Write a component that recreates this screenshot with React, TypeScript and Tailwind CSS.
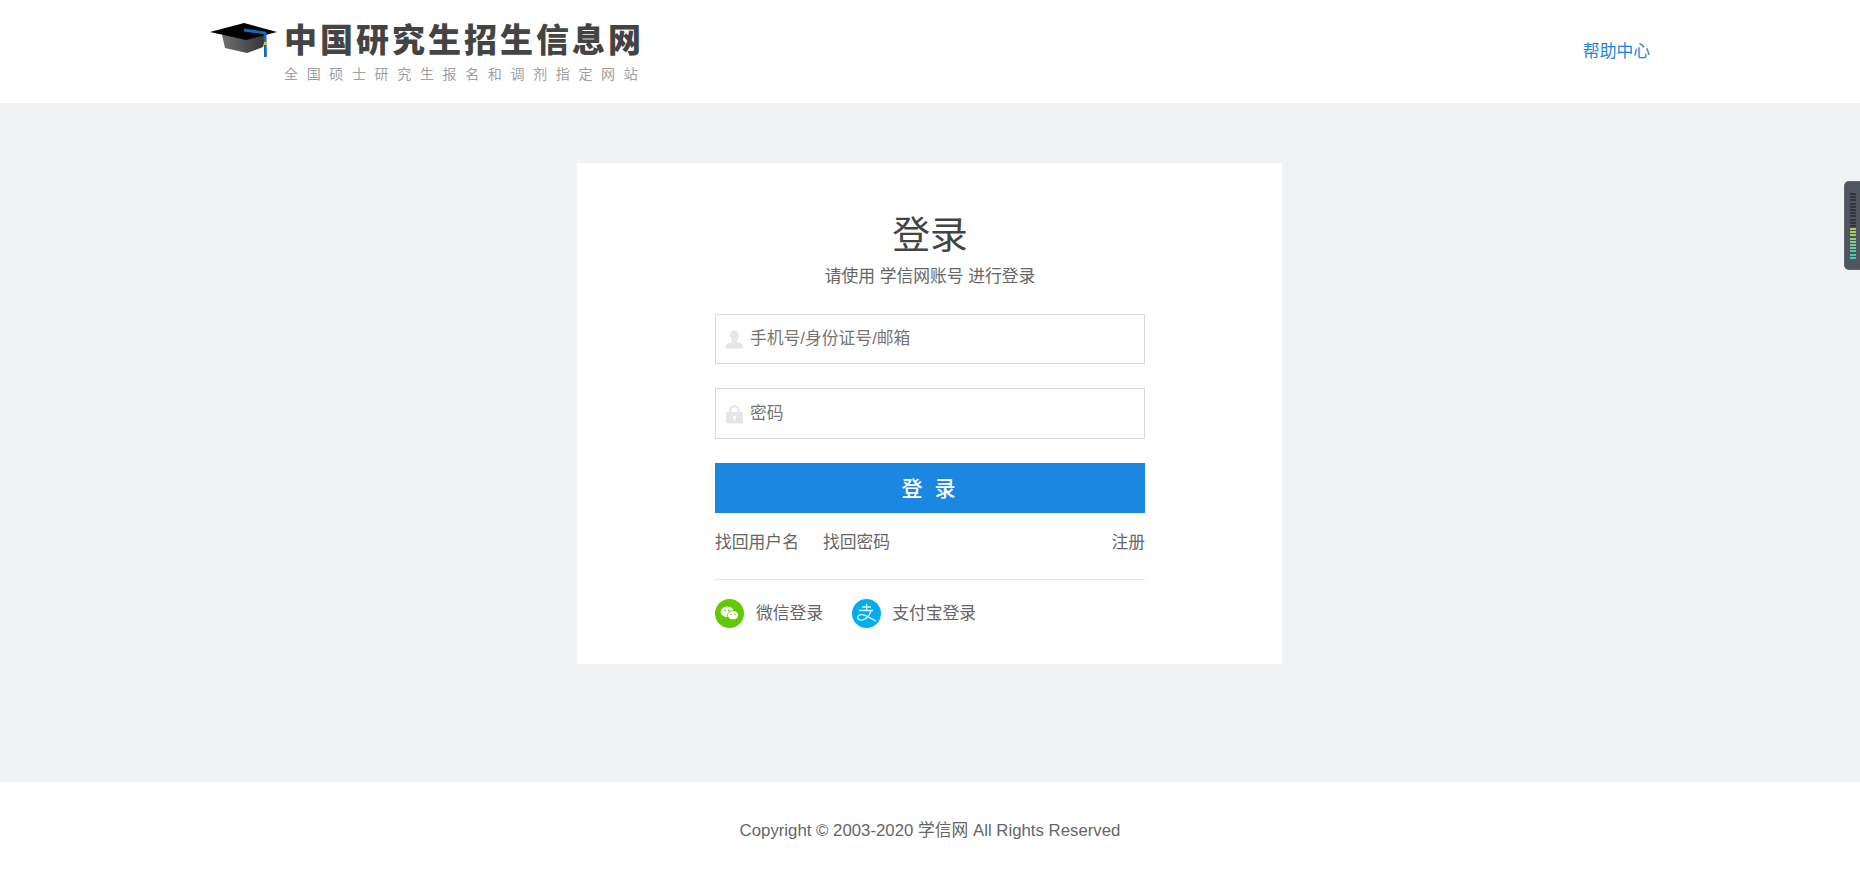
const sans = "font-['Liberation_Sans','Noto_Sans_CJK_SC',sans-serif]"

function Cap() {
  return (
    <svg width="68" height="36" viewBox="0 0 68 36" className="shrink-0">
      <defs>
        <linearGradient id="capBase" x1="0" y1="0" x2="1" y2="0">
          <stop offset="0" stopColor="#707070" />
          <stop offset="1" stopColor="#333333" />
        </linearGradient>
      </defs>
      <path d="M12 12 L15 25 L37 30 L53 24 L56 12 Z" fill="url(#capBase)" />
      <path d="M0 9 L34 0 L67 9 L36 17 Z" fill="#000" />
      <path d="M34 7 L55 10 L55.500 34" fill="none" stroke="#1467c4" strokeWidth="2.800" />
      <rect x="54" y="19" width="3" height="3" fill="#e8b93c" />
    </svg>
  )
}

function LevelMeter() {
  const bars = ['#33363d', '#33363d', '#33363d', '#33363d', '#33363d', '#33363d', '#33363d', '#33363d', '#33363d', '#33363d', '#33363d', '#b8c93c', '#aecb52', '#a3cd62', '#94ce72', '#82cf80', '#70cf8c', '#5ecf98', '#4ccda2', '#40ccaa', '#38cbb0']
  return (
    <div className="fixed right-0 top-[181px] w-[16px] h-[89px] bg-[#50545e] rounded-l-[5px] border border-r-0 border-[#62666f] pt-[11px] pl-[5px] flex flex-col gap-[1.2px]">
      {bars.map((c, i) => (
        <div key={i} className="w-[6px] h-[2px]" style={{ backgroundColor: c }} />
      ))}
    </div>
  )
}

export default function App() {
  return (
    <div className={`${sans} min-h-screen bg-white text-[#666]`}>
      <header className="h-[103px] bg-white flex items-start justify-between pl-[210px] pr-[210px]">
        <div className="flex items-start pt-[23px]">
          <Cap />
          <div className="ml-[6px] -mt-[6px]">
            <div className="font-['Noto_Sans_CJK_SC',sans-serif] font-black text-[33px] leading-[42px] tracking-[3px] text-[#444] whitespace-nowrap">中国研究生招生信息网</div>
            <div className="text-[14px] leading-[18px] tracking-[8.65px] text-[#a0a0a0] mt-[6px] whitespace-nowrap">全国硕士研究生报名和调剂指定网站</div>
          </div>
        </div>
        <a className="mt-[42px] text-[16.8px] leading-[20px] text-[#1a85e0]">帮助中心</a>
      </header>

      <main className="h-[679px] bg-[#f0f2f4] pt-[60px] pr-[1px]">
        <div className="w-[705px] h-[501px] bg-white mx-auto pt-[51px] pl-[138px] pr-[137px]">
          <h1 className="text-[37.8px] leading-[42px] text-center text-[#444]">登录</h1>
          <p className="text-[16.8px] leading-[20px] text-center mt-[11px]">请使用 学信网账号 进行登录</p>

          <div className="mt-[27px] h-[50px] border border-[#d9d9d9] flex items-center pl-[10px]">
            <svg width="17" height="19" viewBox="0 0 18 19" className="shrink-0">
              <path d="M9 0c2.800 0 4.600 2.200 4.600 5S12.200 10 11.500 11c.2 1 1 1.500 3 2.300 2 .8 3.500 1.500 3.500 3.200V19H0v-2.500c0-1.700 1.500-2.400 3.500-3.200 2-.8 2.800-1.300 3-2.300C5.800 10 4.400 7.800 4.400 5S6.200 0 9 0z" fill="#e6e6e6" />
            </svg>
            <span className="ml-[7px] text-[16.8px] text-[#757575]">手机号/身份证号/邮箱</span>
          </div>

          <div className="mt-[24px] h-[51px] border border-[#d9d9d9] flex items-center pl-[10px]">
            <svg width="17" height="20" viewBox="0 0 18 20" className="shrink-0">
              <path d="M3.500 8V6a5.500 5.500 0 0 1 11 0v2h-2.400V6a3.100 3.100 0 0 0-6.200 0v2z" fill="#e6e6e6" />
              <path fillRule="evenodd" d="M2 8h14a2 2 0 0 1 2 2v8a2 2 0 0 1-2 2H2a2 2 0 0 1-2-2v-8a2 2 0 0 1 2-2zm7 4a1.500 1.500 0 0 0-.8 2.800V17h1.600v-2.200A1.500 1.500 0 0 0 9 12z" fill="#e6e6e6" />
            </svg>
            <span className="ml-[7px] text-[16.8px] text-[#757575]">密码</span>
          </div>

          <button className="mt-[24px] w-full h-[50px] bg-[#1a87e0] text-white text-[21px] tracking-[3px] pt-[1px] font-medium">登 录</button>

          <div className="mt-[18px] flex text-[16.8px] leading-[24px]">
            <a>找回用户名</a>
            <a className="ml-[24px]">找回密码</a>
            <a className="ml-auto">注册</a>
          </div>

          <div className="mt-[24px] border-t border-[#e3e3e3] pt-[19px] flex items-center text-[16.8px]">
            <span className="w-[29px] h-[29px] rounded-full bg-[#62c800] flex items-center justify-center shrink-0">
              <svg width="19" height="15" viewBox="0 0 21 17">
                <ellipse cx="8" cy="6.500" rx="7.500" ry="6" fill="#fff" />
                <ellipse cx="14.500" cy="10.500" rx="6.300" ry="5.200" fill="#fff" stroke="#62c800" />
                <circle cx="5.500" cy="5" r="1" fill="#62c800" />
                <circle cx="10" cy="5" r="1" fill="#62c800" />
                <circle cx="12.500" cy="9.500" r=".8" fill="#62c800" />
                <circle cx="16.500" cy="9.500" r=".8" fill="#62c800" />
              </svg>
            </span>
            <span className="ml-[12px]">微信登录</span>
            <span className="ml-[29px] w-[29px] h-[29px] rounded-full bg-[#00aeef] flex items-center justify-center shrink-0">
              <svg width="21" height="19" viewBox="0 0 21 19" fill="none" stroke="#d6f2fc" strokeWidth="1.400">
                <path d="M6 3h9M10.500 0v6M3 6.500h14" />
                <path d="M15 6.500c-1 5-5 9-9 9.500-3 .3-4.500-1-4.300-2.700C2 11 5 10 8 11c4 1.300 8 4 12 6" />
              </svg>
            </span>
            <span className="ml-[11px]">支付宝登录</span>
          </div>
        </div>
      </main>

      <footer className="h-[97px] bg-white flex items-center justify-center text-[16.8px] text-[#666]">
        Copyright © 2003-2020 学信网 All Rights Reserved
      </footer>

      <LevelMeter />
    </div>
  )
}
